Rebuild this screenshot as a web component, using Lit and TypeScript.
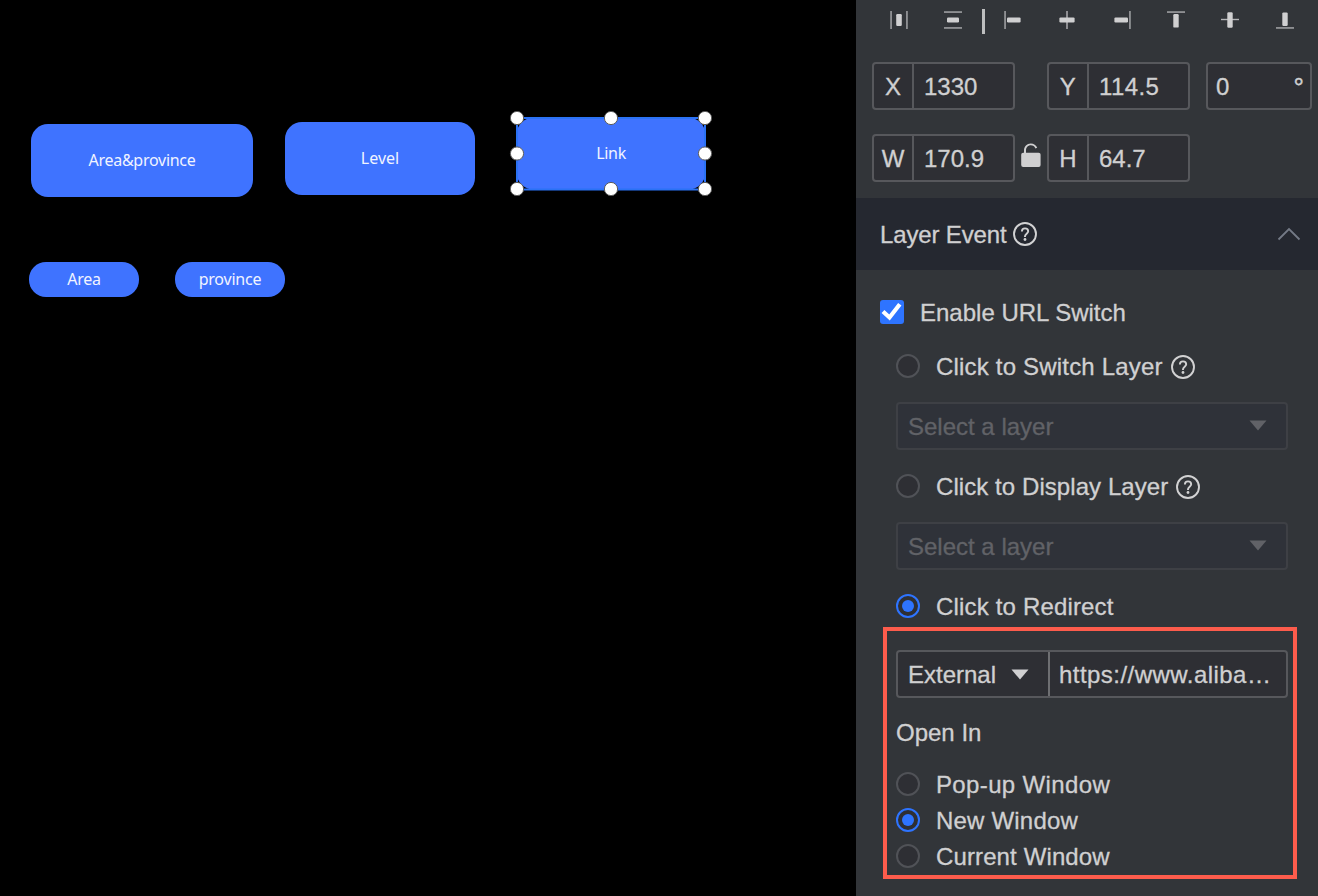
import { LitElement, html, svg, css } from "lit";
import { customElement, property } from "lit/decorators.js";
import { classMap } from "lit/directives/class-map.js";
import { styleMap } from "lit/directives/style-map.js";

@customElement("help-icon")
class HelpIcon extends LitElement {
  static styles = css`
    :host { display: block; width: 24px; height: 24px; }
    svg { display: block; fill: none; stroke: #d2d2d3; stroke-width: 1.9; }
    .dot { fill: #d2d2d3; stroke: none; }
  `;
  render() {
    return html`<svg width="24" height="24" viewBox="0 0 24 24">
      <circle cx="12" cy="12" r="11"></circle>
      <path d="M8.9 9.5C8.9 7.5 10.1 6.400 12 6.400s3.200 1.200 3.200 2.900c0 2.300-3.200 2.600-3.200 5v.8"></path>
      <circle class="dot" cx="12" cy="17.500" r="1.400"></circle>
    </svg>`;
  }
}

@customElement("radio-option")
class RadioOption extends LitElement {
  @property() label = "";
  @property({ type: Number }) tracking = 0;
  @property({ type: Boolean }) checked = false;
  @property({ type: Boolean }) help = false;
  static styles = css`
    :host { display: flex; align-items: center; height: 36px; }
    .ring { box-sizing: border-box; width: 24px; height: 24px; border: 2px solid #505257; border-radius: 50%; background: #2e2f34; display: grid; place-items: center; margin-right: 16px; }
    .on { border-color: #2e74ff; }
    .on::after { content: ""; width: 12px; height: 12px; border-radius: 50%; background: #2e74ff; }
    .text { line-height: 36px; padding-top: 1px; height: 36px; box-sizing: border-box; white-space: nowrap; }
    help-icon { margin: 2px 0 0 8px; }
  `;
  render() {
    return html`<span class=${classMap({ ring: true, on: this.checked })}></span>
      <span class="text" style=${styleMap({ letterSpacing: `${this.tracking}px` })}>${this.label}</span>
      ${this.help ? html`<help-icon></help-icon>` : ""}`;
  }
}

@customElement("value-field")
class ValueField extends LitElement {
  @property() label = "";
  @property() value = "";
  static styles = css`
    :host { box-sizing: border-box; display: flex; width: 143px; height: 48px; border: 2px solid #57585c; border-radius: 4px; background: #2e2f34; line-height: 46px; }
    .key { width: 38px; border-right: 2px solid #57585c; text-align: center; }
    .value { padding-left: 10px; }
  `;
  render() {
    return html`<span class="key">${this.label}</span><span class="value">${this.value}</span>`;
  }
}

const bar = (x: number, y: number, w: number, h: number) =>
  svg`<rect class="bar" x=${x} y=${y} width=${w} height=${h} rx="1.2"></rect>`;
const rule = (x: number, y: number, w: number, h: number) =>
  svg`<rect class="rule" x=${x} y=${y} width=${w} height=${h}></rect>`;

const tools = [
  svg`${rule(6.4, 11, 1.3, 18)}${bar(12.2, 14, 5.6, 12)}${rule(22.3, 11, 1.3, 18)}`,
  svg`${rule(6, 11.4, 18, 1.3)}${bar(9, 17.4, 12, 5)}${rule(6, 27.3, 18, 1.3)}`,
  null,
  svg`${rule(6.4, 11, 1.3, 18)}${bar(9, 17.4, 13.6, 5)}`,
  svg`${rule(14.3, 11, 1.4, 18)}${bar(7.4, 17.4, 15.2, 5)}`,
  svg`${rule(22.3, 11, 1.3, 18)}${bar(7.4, 17.4, 13.6, 5)}`,
  svg`${rule(6, 11.4, 18, 1.3)}${bar(12.3, 14, 5.4, 13.6)}`,
  svg`${rule(6, 18.8, 18, 1.4)}${bar(12.3, 12.3, 5.4, 15.4)}`,
  svg`${rule(6, 27.3, 18, 1.3)}${bar(12.3, 12.4, 5.4, 13.6)}`,
];

@customElement("app-root")
class AppRoot extends LitElement {
  static styles = css`
    :host { display: flex; width: 1318px; height: 896px; overflow: hidden; background: #000; color: #d0d0d1; font: 24px/36px "Liberation Sans", Arial, sans-serif; }
    .canvas { position: relative; width: 856px; background: #000; color: #f1f4ff; font: 16px/24px "Noto Sans", sans-serif; letter-spacing: -0.2px; }
    .node { position: absolute; box-sizing: border-box; display: grid; place-items: center; padding-bottom: 2px; background: #3f73ff; border-radius: 17px; }
    .n1 { left: 31px; top: 124px; width: 222px; height: 73px; padding-bottom: 1px; letter-spacing: -0.27px; }
    .n2 { left: 285px; top: 122px; width: 190px; height: 73px; letter-spacing: 0; }
    .n3 { left: 516px; top: 117px; width: 190px; height: 73px; border-radius: 19px; letter-spacing: -0.3px; }
    .n4 { left: 29px; top: 262px; width: 110px; height: 35px; }
    .n5 { left: 175px; top: 262px; width: 110px; height: 35px; }
    .selection { position: absolute; left: 509px; top: 110px; }
    .frame { fill: none; stroke: #2b72f5; stroke-width: 2; }
    .handle { fill: #fff; stroke: #5c5c5c; stroke-width: 1; }

    .panel { width: 462px; background: #323539; -webkit-text-stroke: 0.3px currentColor; }
    .toolbar { display: grid; grid-template-columns: 54px 43px 17px 54px 55px 54px 54px 55px 48px; height: 62px; padding-left: 28px; }
    .toolbar svg, .lock, .tri, .chev, .tick { display: block; }
    .bar { fill: #d0d0d1; }
    .rule { fill: #b5b6b8; }
    .sep { width: 3px; height: 25px; margin: 9px 0 0 1px; background: #bdbebf; }
    .fields { display: flex; padding-left: 16px; height: 72px; }
    .fields .second { margin-left: 32px; }
    .fields .wide { letter-spacing: 0.4px; }
    .fields .lock + .second { margin-left: 6px; }
    .angle { box-sizing: border-box; display: flex; justify-content: space-between; width: 106px; height: 48px; margin-left: 16px; padding: 0 6px 0 8px; border: 2px solid #57585c; border-radius: 4px; background: #2e2f34; line-height: 46px; }
    .degree { font-size: 26px; -webkit-text-stroke-width: 0.4px; }
    .lock { margin: 9px 0 0 6px; fill: #d0d0d1; }
    .fields.size { height: 64px; }
    .head { box-sizing: border-box; display: flex; align-items: center; height: 72px; padding: 2px 17px 0 24px; background: #252830; }
    .title { letter-spacing: -0.15px; }
    .head help-icon { margin: -2px 0 0 7px; }
    .chev { margin: -2px 0 0 auto; fill: none; stroke: #747a86; stroke-width: 1.8; }
    .enable { display: flex; align-items: center; height: 36px; margin: 24px 0 0 24px; }
    .check { display: grid; place-items: center; width: 24px; height: 24px; border-radius: 3px; background: #2e74ff; margin-right: 16px; }
    .tick { fill: none; stroke: #fff; stroke-width: 4.2; }
    .enable .label { padding-top: 2px; }
    .options { padding-left: 40px; }
    .options radio-option { margin-top: 18px; }
    .select { box-sizing: border-box; display: flex; align-items: center; justify-content: space-between; width: 392px; height: 48px; margin-top: 18px; padding: 2px 19px 0 10px; border: 2px solid #3e4045; border-radius: 4px; background: #2f3239; color: #616267; }
    .tri { fill: currentColor; margin-top: -3px; }
    .kind .tri { margin-top: -2px; }
    .callout { box-sizing: border-box; width: 414px; height: 252px; margin: 3px 0 0 27px; padding: 19px 0 0 9px; border: 4px solid #fd5c4c; }
    .url { box-sizing: border-box; display: flex; width: 392px; height: 48px; border: 2px solid #57585c; border-radius: 4px; background: #2e2f34; line-height: 46px; }
    .kind { box-sizing: border-box; display: flex; align-items: center; justify-content: space-between; width: 152px; padding: 2px 19px 0 10px; border-right: 2px solid #6e6f72; }
    .address { flex: 1; min-width: 0; padding-left: 9px; white-space: nowrap; letter-spacing: 0.46px; }
    .open { padding: 17px 0 15px; }
  `;

  private handles = [[8, 8], [102, 8], [196, 8], [8, 43.5], [196, 43.5], [8, 79], [102, 79], [196, 79]];

  private triangle() {
    return html`<svg class="tri" width="18" height="11" viewBox="0 0 18 11"><path d="M0.5 0.5h17L9 10.5z"></path></svg>`;
  }

  private lock() {
    return html`<svg class="lock" width="20" height="25" viewBox="0 0 20 25">
      <rect x="0.2" y="9.8" width="19.4" height="14.2" rx="2"></rect>
      <path d="M3 11V7.5C3 3.3 6 .4 9.8 .4c3 0 5.3 1.7 6.4 4.300l-1.800.8C13.600 3.500 12 2.300 9.800 2.300 7 2.300 5 4.500 5 7.500V11z"></path>
    </svg>`;
  }

  render() {
    return html`
      <main class="canvas">
        <div class="node n1">Area&amp;province</div>
        <div class="node n2">Level</div>
        <div class="node n3">Link</div>
        <div class="node n4">Area</div>
        <div class="node n5">province</div>
        <svg class="selection" width="204" height="88" viewBox="0 0 204 88">
          <rect class="frame" x="8" y="8" width="188" height="71.5"></rect>
          ${this.handles.map(([x, y]) => svg`<circle class="handle" cx=${x} cy=${y} r="6.6"></circle>`)}
        </svg>
      </main>
      <aside class="panel">
        <div class="toolbar">
          ${tools.map((t) => t ? html`<svg width="30" height="40" viewBox="0 0 30 40">${t}</svg>` : html`<span class="sep"></span>`)}
        </div>
        <div class="fields">
          <value-field label="X" value="1330"></value-field>
          <value-field class="second wide" label="Y" value="114.5"></value-field>
          <div class="angle"><span>0</span><span class="degree">°</span></div>
        </div>
        <div class="fields size">
          <value-field label="W" value="170.9"></value-field>
          ${this.lock()}
          <value-field class="second" label="H" value="64.7"></value-field>
        </div>
        <div class="head">
          <span class="title">Layer Event</span><help-icon></help-icon>
          <svg class="chev" width="24" height="14" viewBox="0 0 24 14"><path d="M1.5 12.5L12 2l10.5 10.5"></path></svg>
        </div>
        <div class="enable">
          <span class="check"><svg class="tick" width="24" height="24" viewBox="0 0 24 24"><path d="M3 11.5l6.500 6L19.800 4.300"></path></svg></span>
          <span class="label">Enable URL Switch</span>
        </div>
        <div class="options">
          <radio-option label="Click to Switch Layer" tracking="0.19" help></radio-option>
          <div class="select"><span>Select a layer</span>${this.triangle()}</div>
          <radio-option label="Click to Display Layer" tracking="0.07" help></radio-option>
          <div class="select"><span>Select a layer</span>${this.triangle()}</div>
          <radio-option label="Click to Redirect" tracking="0.17" checked></radio-option>
        </div>
        <section class="callout">
          <div class="url">
            <span class="kind"><span>External</span>${this.triangle()}</span>
            <span class="address">https://www.aliba…</span>
          </div>
          <div class="open">Open In</div>
          <radio-option label="Pop-up Window" tracking="0.36"></radio-option>
          <radio-option label="New Window" tracking="0.2" checked></radio-option>
          <radio-option label="Current Window" tracking="0.12"></radio-option>
        </section>
      </aside>`;
  }
}
